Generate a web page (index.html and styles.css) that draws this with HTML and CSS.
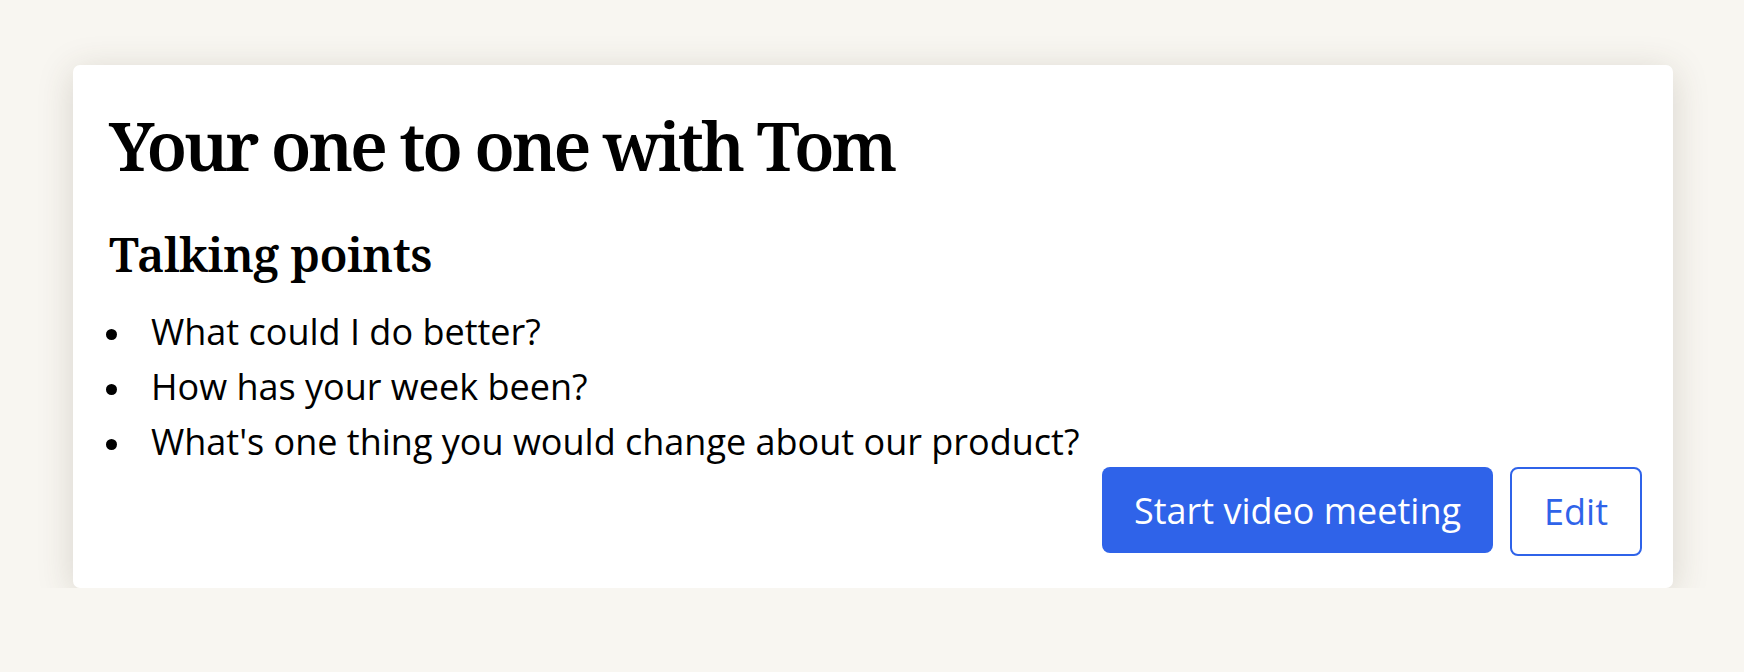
FILE: index.html
```html
<!DOCTYPE html>
<html lang="en">
<head>
<meta charset="utf-8">
<title>Your one to one with Tom</title>
<link rel="stylesheet" href="styles.css">
</head>
<body>
  <main class="page">
    <section class="card">
      <h1 class="title">Your one to one with Tom</h1>
      <h2 class="subtitle">Talking points</h2>
      <ul class="points">
        <li>What could I do better?</li>
        <li>How has your week been?</li>
        <li>What's one thing you would change about our product?</li>
      </ul>
      <div class="actions">
        <button class="btn btn-primary" type="button">Start video meeting</button>
        <button class="btn btn-outline" type="button">Edit</button>
      </div>
    </section>
  </main>
</body>
</html>
```

FILE: styles.css
```css
html, body {
  margin: 0;
  padding: 0;
  background: #f8f6f1;
}

body {
  font-family: "Open Sans", "Noto Sans", sans-serif;
  color: #000;
}

.page {
  padding: 65px 0 0 73px;
}

.card {
  width: 1600px;
  box-sizing: border-box;
  background: #fff;
  border-radius: 7px;
  box-shadow: 0 6px 36px rgba(70, 60, 40, 0.18);
  padding: 40px 31px 32px 36px;
}

.title {
  margin: 0;
  font-family: "Noto Serif", "DejaVu Serif Condensed", "DejaVu Serif", serif;
  font-weight: 600;
  font-size: 68px;
  line-height: 80px;
  letter-spacing: -3.2px;
}

.subtitle {
  margin: 41px 0 0;
  font-family: "Noto Serif", "DejaVu Serif Condensed", "DejaVu Serif", serif;
  font-weight: 600;
  font-size: 47px;
  line-height: 56px;
  letter-spacing: -0.6px;
}

.points {
  margin: 22px 0 0;
  padding: 0;
  list-style: none;
  font-size: 36px;
  line-height: 55px;
}

.points li {
  display: flex;
}

.points li::before {
  content: "";
  flex: 0 0 11px;
  height: 11px;
  border-radius: 50%;
  background: #000;
  margin: 25px 34px 0 -3px;
}

.actions {
  display: flex;
  justify-content: flex-end;
  align-items: flex-start;
  gap: 17px;
  margin-top: -2px;
}

.btn {
  font-family: "Open Sans", "Noto Sans", sans-serif;
  font-size: 36px;
  border-radius: 8px;
  cursor: pointer;
}

.btn-primary {
  background: #2f63e9;
  color: #fff;
  border: 0;
  height: 86px;
  padding: 0 32px;
}

.btn-outline {
  background: #fff;
  color: #2f63e9;
  border: 2px solid #2f63e9;
  height: 89px;
  padding: 0 32px;
}
```
